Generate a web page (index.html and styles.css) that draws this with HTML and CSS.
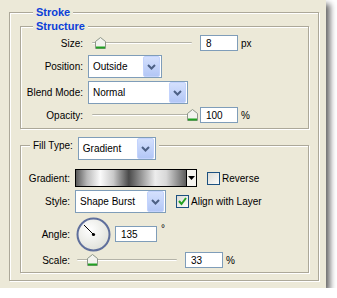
FILE: index.html
```html
<!DOCTYPE html>
<html lang="en">
<head>
  <meta charset="UTF-8" />
  <title>Stroke</title>
  <link rel="stylesheet" href="styles.css">
</head>
<body>

  <div class="panel">
    <fieldset class="stroke">
      <legend class="title stroke-title">Stroke</legend>

      <fieldset class="group structure">
        <legend class="title structure-title">Structure</legend>

        <div class="rows">
          <div class="row r-size">
            <span class="lbl">Size:</span>
            <div class="slider">
              <div class="track"></div>
              <svg class="thumb" style="left: 7px" width="11" height="12" viewBox="0 0 11 12">
                <polygon points="0.5,4.5 5.5,0.5 10.5,4.5 10.5,11.5 0.5,11.5" fill="#f3f3ee" stroke="#8d9689" />
                <rect x="1" y="9.5" width="9" height="2" fill="#21a121" />
              </svg>
            </div>
            <input class="num" type="text" value="8" />
            <span class="unit">px</span>
          </div>

          <div class="row r-select">
            <span class="lbl">Position:</span>
            <div class="select w-position">
              <span class="val">Outside</span>
              <span class="arrow"><svg width="9" height="6" viewBox="0 0 9 6"><polyline points="1,1 4.5,4.5 8,1" fill="none" stroke="#4d6185" stroke-width="2" /></svg></span>
            </div>
          </div>

          <div class="row r-select">
            <span class="lbl">Blend Mode:</span>
            <div class="select w-blend">
              <span class="val">Normal</span>
              <span class="arrow"><svg width="9" height="6" viewBox="0 0 9 6"><polyline points="1,1 4.5,4.5 8,1" fill="none" stroke="#4d6185" stroke-width="2" /></svg></span>
            </div>
          </div>

          <div class="row r-opacity">
            <span class="lbl">Opacity:</span>
            <div class="slider">
              <div class="track"></div>
              <svg class="thumb" style="left: 99px" width="11" height="12" viewBox="0 0 11 12">
                <polygon points="0.5,4.5 5.5,0.5 10.5,4.5 10.5,11.5 0.5,11.5" fill="#f3f3ee" stroke="#8d9689" />
                <rect x="1" y="9.5" width="9" height="2" fill="#21a121" />
              </svg>
            </div>
            <input class="num" type="text" value="100" />
            <span class="unit">%</span>
          </div>
        </div>
      </fieldset>

      <fieldset class="group fill">
        <legend class="fill-legend">
          <div class="fill-head">
            <span class="fill-lbl">Fill Type:</span>
            <div class="select w-filltype">
              <span class="val">Gradient</span>
              <span class="arrow"><svg width="9" height="6" viewBox="0 0 9 6"><polyline points="1,1 4.5,4.5 8,1" fill="none" stroke="#4d6185" stroke-width="2" /></svg></span>
            </div>
          </div>
        </legend>

        <div class="rows fill-rows">
          <div class="row r-gradient">
            <span class="lbl">Gradient:</span>
            <div class="grad-bar"></div>
            <div class="grad-btn"><svg width="7" height="4" viewBox="0 0 7 4"><polygon points="0,0 7,0 3.5,4" fill="#000" /></svg></div>
            <span class="check"></span>
            <span class="check-lbl">Reverse</span>
          </div>

          <div class="row r-style">
            <span class="lbl">Style:</span>
            <div class="select w-style">
              <span class="val">Shape Burst</span>
              <span class="arrow"><svg width="9" height="6" viewBox="0 0 9 6"><polyline points="1,1 4.5,4.5 8,1" fill="none" stroke="#4d6185" stroke-width="2" /></svg></span>
            </div>
            <span class="check">
              <svg width="11" height="11" viewBox="0 0 11 11"><polyline points="2,5 4.5,8 9,2" fill="none" stroke="#21a121" stroke-width="2" /></svg>
            </span>
            <span class="check-lbl">Align with Layer</span>
          </div>

          <div class="row r-angle">
            <span class="lbl">Angle:</span>
            <svg class="dial" width="35" height="35" viewBox="0 0 35 35">
              <defs>
                <radialGradient id="dialfill" cx="0.4" cy="0.35" r="0.7">
                  <stop offset="0" stop-color="#ffffff" />
                  <stop offset="1" stop-color="#dedfd8" />
                </radialGradient>
              </defs>
              <circle cx="17.5" cy="17.5" r="16" fill="url(#dialfill)" stroke="#5f6f9c" stroke-width="2" />
              <line x1="17.5" y1="17.5" x2="8" y2="8" stroke="#000" stroke-width="1" />
              <circle cx="17.5" cy="17.5" r="1.6" fill="#000" />
            </svg>
            <input class="num angle-num" type="text" value="135" />
            <span class="deg">°</span>
          </div>

          <div class="row r-scale">
            <span class="lbl">Scale:</span>
            <div class="slider scale-slider">
              <div class="track"></div>
              <svg class="thumb" style="left: 14px" width="11" height="12" viewBox="0 0 11 12">
                <polygon points="0.5,4.5 5.5,0.5 10.5,4.5 10.5,11.5 0.5,11.5" fill="#f3f3ee" stroke="#8d9689" />
                <rect x="1" y="9.5" width="9" height="2" fill="#21a121" />
              </svg>
            </div>
            <input class="num" type="text" value="33" />
            <span class="unit">%</span>
          </div>
        </div>
      </fieldset>
    </fieldset>
  </div>

</body>
</html>
```

FILE: styles.css
```css
body {
  margin: 0;
  background: #fff;
  font-family: "Liberation Sans", Arial, sans-serif;
  font-size: 10px;
  color: #000;
}

.panel {
  width: 326px;
  height: 288px;
  box-sizing: border-box;
  padding: 6px 0 0 9px;
  background: #ece9d8;
  box-shadow: 4px 4px 6px rgba(0, 0, 0, 0.6);
}

fieldset {
  margin: 0;
  padding: 0;
  min-width: 0;
  border: 1px solid #aca899;
  box-shadow: inset 1px 1px 0 #fff, 1px 1px 0 #fff;
}

legend {
  padding: 0 3px;
  background: #ece9d8;
}

.title {
  color: #0b3fd8;
  font-size: 11px;
  font-weight: bold;
}

.stroke {
  width: 310px;
  box-sizing: border-box;
  padding: 0 9px 7px 10px;
}

.stroke-title {
  margin-left: 13px;
  line-height: 13px;
}

.structure-title {
  margin-left: 12px;
  line-height: 14px;
}

.group {
  width: 289px;
  box-sizing: border-box;
}

.rows {
  padding: 2px 0 5px 0;
}

.row {
  display: flex;
  align-items: center;
}

.lbl {
  flex: none;
  width: 62px;
  margin-right: 5px;
  text-align: right;
}

.r-size {
  height: 16px;
}

.r-select {
  height: 23px;
  margin-top: 4px;
}

.r-select + .r-select {
  margin-top: 3px;
}

.r-opacity {
  height: 16px;
  margin-top: 3px;
}

/* slider */
.slider {
  position: relative;
  flex: none;
  width: 108px;
  height: 16px;
  padding: 0 4px;
  box-sizing: border-box;
}

.track {
  margin-top: 7px;
  height: 1px;
  background: #b4b3a8;
  border-bottom: 1px solid #fff;
  border-radius: 1px;
}

.thumb {
  position: absolute;
  top: 2px;
}

.num {
  flex: none;
  width: 38px;
  height: 16px;
  box-sizing: border-box;
  margin: 0 0 0 4px;
  padding: 0 0 0 5px;
  border: 1px solid #7f9db9;
  background: #fff;
  font-family: "Liberation Sans", Arial, sans-serif;
  font-size: 10px;
  color: #000;
  outline: none;
}

.unit {
  margin-left: 3px;
}

/* dropdowns */
.select {
  flex: none;
  display: flex;
  align-items: center;
  height: 23px;
  box-sizing: border-box;
  border: 1px solid #7f9db9;
  background: #fff;
  padding: 1px;
}

.select .val {
  flex: 1;
  padding-left: 3px;
  white-space: nowrap;
}

.select .arrow {
  flex: none;
  display: flex;
  align-items: center;
  justify-content: center;
  width: 15px;
  height: 19px;
  border: 1px solid #c3d3fd;
  border-radius: 2px;
  background: linear-gradient(#d4e0fd, #b3c7f6);
}

.w-position { width: 74px; }
.w-blend { width: 100px; }
.w-filltype { width: 78px; }
.w-style { width: 91px; }

/* fill group */
.fill {
  margin-top: 8px;
}

.fill-legend {
  margin-left: 9px;
}

.fill-head {
  display: flex;
  align-items: flex-start;
  height: 17px;
}

.fill-lbl {
  line-height: 17px;
  margin-right: 5px;
}

.fill-rows {
  padding: 15px 0 4px 0;
}

.fill .lbl {
  width: 49px;
}

.r-gradient {
  height: 18px;
}

.grad-bar {
  flex: none;
  width: 111px;
  height: 18px;
  box-sizing: border-box;
  border: 1px solid #000;
  border-right: none;
  background: linear-gradient(90deg, #5a5a5a 0%, #b9b9b9 10%, #fbfbfb 22%, #c9c9c9 34%, #4a4a4a 48%, #8e8e8e 58%, #ededed 72%, #d8d8d8 82%, #5c5c5c 100%);
}

.grad-btn {
  flex: none;
  display: flex;
  align-items: center;
  justify-content: center;
  width: 11px;
  height: 18px;
  box-sizing: border-box;
  border: 1px solid #000;
  background: #f5f4ef;
}

.check {
  flex: none;
  display: flex;
  align-items: center;
  justify-content: center;
  width: 13px;
  height: 13px;
  box-sizing: border-box;
  margin-left: 10px;
  border: 1px solid #1c5180;
  background: linear-gradient(135deg, #dcdcd6, #fbfbf9);
}

.check-lbl {
  margin-left: 2px;
  white-space: nowrap;
}

.r-style {
  height: 23px;
  margin-top: 3px;
}

.r-angle {
  height: 34px;
  margin-top: 4px;
}

.dial {
  flex: none;
  margin-left: 1px;
}

.angle-num {
  width: 42px;
}

.deg {
  align-self: flex-start;
  margin: 6px 0 0 4px;
}

.r-scale {
  height: 16px;
  margin-top: 1px;
}

.scale-slider {
  margin-left: -2px;
}
```
